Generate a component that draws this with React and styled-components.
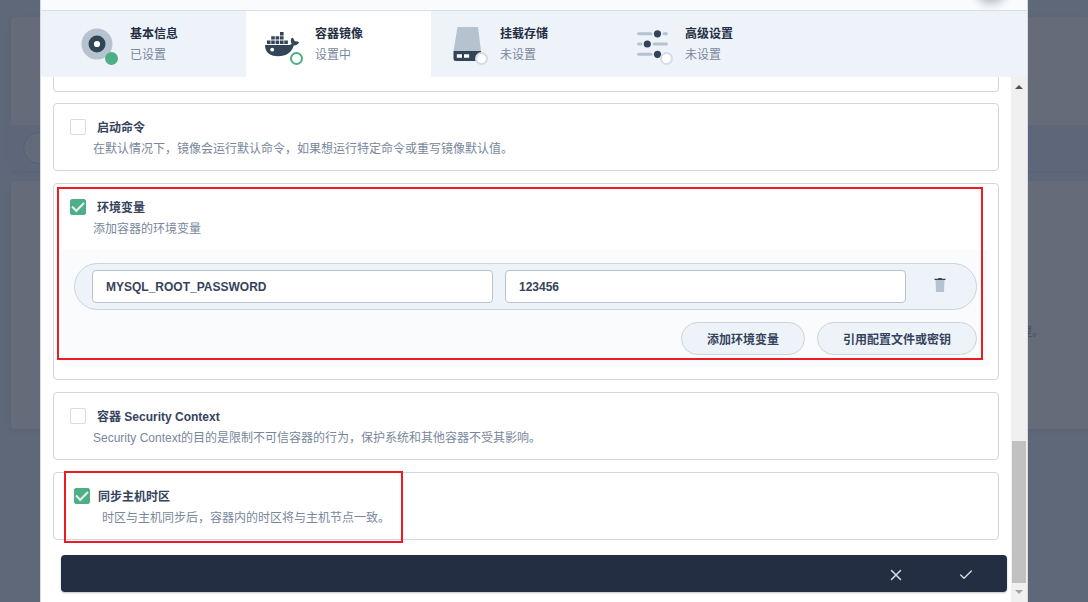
import React, { useState } from "react";
import styled, { createGlobalStyle, css } from "styled-components";
import { Check, X } from "lucide-react";

const GlobalStyle = createGlobalStyle`
    * {
        box-sizing: border-box;
    }
    body {
        margin: 0;
        background: #5f6879;
        color: #36435c;
        font-family: "Liberation Sans", "Noto Sans CJK SC", sans-serif;
        font-size: 12px;
        line-height: 18px;
    }
    button,
    input {
        font: inherit;
        color: inherit;
        margin: 0;
    }
`;

const steps = [
    { title: "基本信息", state: "已设置", status: "done", Icon: InfoIcon },
    { title: "容器镜像", state: "设置中", status: "current", Icon: DockerIcon },
    { title: "挂载存储", state: "未设置", status: "todo", Icon: StorageIcon },
    { title: "高级设置", state: "未设置", status: "todo", Icon: SlidersIcon },
];

export default function App() {
    return (
        <>
            <GlobalStyle />
            <Backdrop />
            <Modal>
                <ModalTop />
                <Steps>
                    {steps.map(({ title, state, status, Icon }) => (
                        <Step key={title} type="button" $active={status === "current"}>
                            <StepIcon>
                                <Icon />
                                <Badge $status={status} />
                            </StepIcon>
                            <StepText>
                                <strong>{title}</strong>
                                <span>{state}</span>
                            </StepText>
                        </Step>
                    ))}
                </Steps>
                <Body>
                    <Content>
                        <Cards>
                            <CardTail />
                            <Option
                                id="command"
                                title="启动命令"
                                desc="在默认情况下，镜像会运行默认命令，如果想运行特定命令或重写镜像默认值。"
                            />
                            <Option
                                id="env"
                                title="环境变量"
                                desc="添加容器的环境变量"
                                checked
                            >
                                <EnvPanel />
                                <EnvMark />
                            </Option>
                            <Option
                                id="security"
                                title="容器 Security Context"
                                desc="Security Context的目的是限制不可信容器的行为，保护系统和其他容器不受其影响。"
                            />
                            <Option
                                id="timezone"
                                title="同步主机时区"
                                desc="时区与主机同步后，容器内的时区将与主机节点一致。"
                                checked
                                shifted
                            >
                                <ZoneMark />
                            </Option>
                        </Cards>
                        <ActionBar>
                            <button type="button" aria-label="取消">
                                <X size={18} strokeWidth={2} />
                            </button>
                            <button type="button" aria-label="确定">
                                <Check size={16} strokeWidth={2} />
                            </button>
                        </ActionBar>
                    </Content>
                    <ScrollBar aria-hidden="true">
                        <Arrow $up />
                        <Thumb />
                        <Arrow />
                    </ScrollBar>
                </Body>
            </Modal>
        </>
    );
}

function Backdrop() {
    return (
        <Behind aria-hidden="true">
            <BehindCard>
                <BehindMain />
                <BehindFoot>
                    <BehindPill />
                </BehindFoot>
            </BehindCard>
            <BehindNote>理。</BehindNote>
        </Behind>
    );
}

function Option({ id, title, desc, checked, shifted, children }) {
    const [on, setOn] = useState(Boolean(checked));
    return (
        <Card>
            <OptionHead $shifted={shifted}>
                <OptionTitle htmlFor={id} $shifted={shifted}>
                    <CheckBox
                        id={id}
                        type="checkbox"
                        checked={on}
                        onChange={(e) => setOn(e.target.checked)}
                    />
                    {title}
                </OptionTitle>
                <OptionDesc $shifted={shifted}>{desc}</OptionDesc>
            </OptionHead>
            {children}
        </Card>
    );
}

function EnvPanel() {
    return (
        <Panel>
            <EnvRow>
                <TextBox aria-label="变量名" defaultValue="MYSQL_ROOT_PASSWORD" />
                <TextBox aria-label="变量值" defaultValue="123456" />
                <TrashButton type="button" aria-label="删除">
                    <svg width="12" height="16" viewBox="0 0 12 16">
                        <path d="M1.5 2.5h9L10 15H2z" fill="#b6c2cd" />
                        <path d="M.5 1.7H4L4.6 1h2.8l.6.7h3.5V3H.5z" fill="#324558" />
                    </svg>
                </TrashButton>
            </EnvRow>
            <EnvActions>
                <PillButton type="button">添加环境变量</PillButton>
                <PillButton type="button">引用配置文件或密钥</PillButton>
            </EnvActions>
        </Panel>
    );
}

function InfoIcon() {
    return (
        <svg width="40" height="40" viewBox="0 0 40 40">
            <circle cx="20" cy="20" r="15.5" fill="#b6c2cd" />
            <circle cx="20" cy="20" r="5.8" fill="#fff" stroke="#324558" strokeWidth="5.4" />
        </svg>
    );
}

function DockerIcon() {
    return (
        <svg width="40" height="40" viewBox="0 0 40 40" fill="#324558">
            <path d="M18 8h3.6v3.4H18zM9.2 12.2h3.6v3.4H9.2zM13.6 12.2h3.6v3.4h-3.6zM18 12.2h3.6v3.4H18z" />
            <path d="M4.9 16.5h3.6v3.4H4.9zM9.2 16.5h3.6v3.4H9.2zM13.6 16.5h3.6v3.4h-3.6zM18 16.5h3.6v3.4H18zM22.3 16.5h3.6v3.4h-3.6z" />
            <path d="M3 21h23c1.800 0 3.200-.5 3.800-1.300-1.500-1.900-1.400-4.300.3-6.200 1.500 1.100 2.300 2.300 2.500 3.800 1.600-.3 3.200 0 4.600.9-1 2.100-2.800 3.200-5.400 3.200C29.400 28.400 24.500 32.200 16 32.200S3 28.200 3 21z" />
            <circle cx="10.2" cy="25.7" r="1.9" fill="#fff" />
        </svg>
    );
}

function StorageIcon() {
    return (
        <svg width="40" height="40" viewBox="0 0 40 40">
            <path d="M10.5 3H31l3 24H6.5z" fill="#b6c2cd" />
            <path d="M6.5 27H34v7.5a2.5 2.5 0 0 1-2.5 2.5H9a2.5 2.5 0 0 1-2.5-2.5z" fill="#324558" />
            <path d="M9.8 30.3H15v3.5H9.8zM17 30.3h5.2v3.5H17z" fill="#fff" />
        </svg>
    );
}

function SlidersIcon() {
    return (
        <svg width="40" height="40" viewBox="0 0 40 40">
            <path
                d="M6.5 9.8H19M32 9.8h2.5M6.5 20H9M22 20h12.5M6.5 30.3H19"
                stroke="#b6c2cd"
                strokeWidth="3"
                strokeLinecap="round"
            />
            <g fill="#324558">
                <circle cx="25.5" cy="9.8" r="3.6" />
                <circle cx="15.3" cy="20" r="3.6" />
                <circle cx="25.5" cy="30.3" r="3.6" />
            </g>
        </svg>
    );
}

const Behind = styled.div`
    position: fixed;
    inset: 0;
    padding: 17px 0 0 11px;
    display: flex;
    flex-direction: column;
    gap: 10px;
`;

const BehindCard = styled.div`
    border-radius: 4px 0 0 4px;
    overflow: hidden;
    box-shadow: 0 2px 4px #5a6375;
`;

const BehindMain = styled.div`
    height: 108px;
    background: #656b78;
`;

const BehindFoot = styled.div`
    padding: 7px 12px;
    background: #5e677a;
`;

const BehindPill = styled.div`
    width: 50%;
    height: 32px;
    border: 1px solid #566074;
    border-radius: 16px;
    background: #646b78;
`;

const BehindNote = styled.div`
    height: 248px;
    padding: 142px 44px 0 0;
    border-radius: 4px 0 0 4px;
    background: #656b78;
    box-shadow: 0 2px 4px #5a6375;
    color: #444d60;
    text-align: right;
`;

const Modal = styled.main`
    position: relative;
    display: flex;
    flex-direction: column;
    min-height: 100vh;
    margin: 0 60px 0 40px;
    border: solid #d5dbe4;
    border-width: 0 1px;
    background: #fff;
`;

/* bottom edge of the title bar, with the shadow of the round close button */
const ModalTop = styled.header`
    position: relative;
    height: 11px;
    overflow: hidden;
    border-bottom: 1px solid #d8dde6;
    background: #f9fbfd;

    &::after {
        content: "";
        position: absolute;
        top: -32px;
        right: 20px;
        width: 32px;
        height: 32px;
        border-radius: 16px;
        box-shadow: 0 4px 8px rgba(36, 46, 66, 0.3);
    }
`;

const Steps = styled.nav`
    display: flex;
    padding-left: 20px;
    background: #eef3fa;
`;

const Step = styled.button`
    display: flex;
    align-items: center;
    gap: 13px;
    width: 185px;
    height: 66px;
    padding: 0 16px;
    border: 0;
    background: ${(props) => (props.$active ? "#fff" : "transparent")};
    text-align: left;
`;

const StepIcon = styled.span`
    position: relative;
    display: flex;
`;

const Badge = styled.span`
    position: absolute;
    right: -1px;
    bottom: -1px;
    width: 13px;
    height: 13px;
    border-radius: 50%;
    border: 2px solid ${(props) => (props.$status === "todo" ? "#d5dce5" : "#4fae87")};
    background: ${(props) => (props.$status === "done" ? "#4fae87" : "#fff")};
`;

const StepText = styled.span`
    display: flex;
    flex-direction: column;
    gap: 3px;
    strong {
        color: #242e42;
    }
    span {
        color: #79879c;
    }
`;

const Body = styled.div`
    flex: 1;
    display: flex;
`;

const Content = styled.div`
    flex: 1;
    min-width: 0;
    display: flex;
    flex-direction: column;
    justify-content: space-between;
`;

const Cards = styled.div`
    display: flex;
    flex-direction: column;
    gap: 12px;
    padding: 0 12px;
`;

const Card = styled.section`
    position: relative;
    border: 1px solid #d3d6db;
    border-radius: 4px;
`;

const CardTail = styled.div`
    height: 15px;
    margin-bottom: -1px;
    border: 1px solid #d3d6db;
    border-top: 0;
    border-radius: 0 0 4px 4px;
`;

const OptionHead = styled.div`
    padding: 15px 16px 12px ${(props) => (props.$shifted ? "20px" : "16px")};
`;

const OptionTitle = styled.label`
    display: flex;
    align-items: flex-start;
    gap: ${(props) => (props.$shifted ? "8px" : "11px")};
    height: 17px;
    line-height: 19px;
    font-weight: 700;
`;

const OptionDesc = styled.p`
    margin: 4px 0 0;
    padding-left: ${(props) => (props.$shifted ? "28px" : "23px")};
    color: #79879c;
`;

const CheckBox = styled.input`
    appearance: none;
    display: grid;
    place-items: center;
    width: 16px;
    height: 16px;
    border: 1px solid #d8dbe0;
    border-radius: 2px;
    background: #fff;

    &:checked {
        border-color: #4fae87;
        background: #4fae87;
    }
    &:checked::before {
        content: "";
        width: 10px;
        height: 5px;
        margin-bottom: 4px;
        border: solid #e6f4ee;
        border-width: 0 0 2px 2px;
        transform: rotate(-45deg);
    }
`;

const Panel = styled.div`
    margin: 0 9px 12px 8px;
    padding: 13px 12px 12px;
    border-radius: 4px;
    background: #f9fbfd;
`;

const EnvRow = styled.div`
    display: grid;
    grid-template-columns: 1fr 1fr 44px;
    align-items: center;
    gap: 12px;
    padding: 6px 14px 6px 17px;
    border: 1px solid #ccd3db;
    border-radius: 24px;
    background: #eef3fa;
`;

const TextBox = styled.input`
    width: 100%;
    min-width: 0;
    height: 33px;
    padding: 0 13px;
    border: 1px solid #b9c3ce;
    border-radius: 4px;
    background: #fff;
    font-weight: 700;
`;

const TrashButton = styled.button`
    display: flex;
    justify-content: center;
    padding: 0 0 3px;
    border: 0;
    background: none;
`;

const EnvActions = styled.div`
    display: flex;
    justify-content: flex-end;
    gap: 12px;
    margin-top: 12px;
`;

const PillButton = styled.button`
    height: 33px;
    padding: 2px 25px 0;
    border: 1px solid #ccd3db;
    border-radius: 17px;
    background: #eef3fa;
    font-weight: 700;
`;

const mark = css`
    position: absolute;
    border: 2px solid #ed1c24;
    pointer-events: none;
`;

const EnvMark = styled.div`
    ${mark}
    inset: 3px 15px 19px 3px;
`;

const ZoneMark = styled.div`
    ${mark}
    top: -2px;
    bottom: -4px;
    left: 10px;
    width: 339px;
`;

const ActionBar = styled.footer`
    display: flex;
    justify-content: flex-end;
    margin: 15px 4px 10px 20px;
    padding-right: 6px;
    border-radius: 4px;
    background: #242e42;
    box-shadow: 0 1px 2px rgba(36, 46, 66, 0.3);

    button {
        display: flex;
        align-items: center;
        justify-content: center;
        width: 70px;
        height: 37px;
        padding: 2px 0 0;
        border: 0;
        background: none;
        color: #d8dee5;
    }
`;

const ScrollBar = styled.div`
    display: flex;
    flex-direction: column;
    align-items: center;
    justify-content: space-between;
    width: 16px;
    padding: 8px 0;
    background: #f0f0f0;
`;

const Arrow = styled.i`
    border: 4px solid transparent;
    ${(props) =>
        props.$up
            ? "border-top-width: 0; border-bottom-color: #505050;"
            : "border-bottom-width: 0; border-top-color: #a3a3a3;"}
`;

const Thumb = styled.div`
    width: 14px;
    height: 142px;
    margin: auto 0 7px;
    background: #c1c1c1;
`;
